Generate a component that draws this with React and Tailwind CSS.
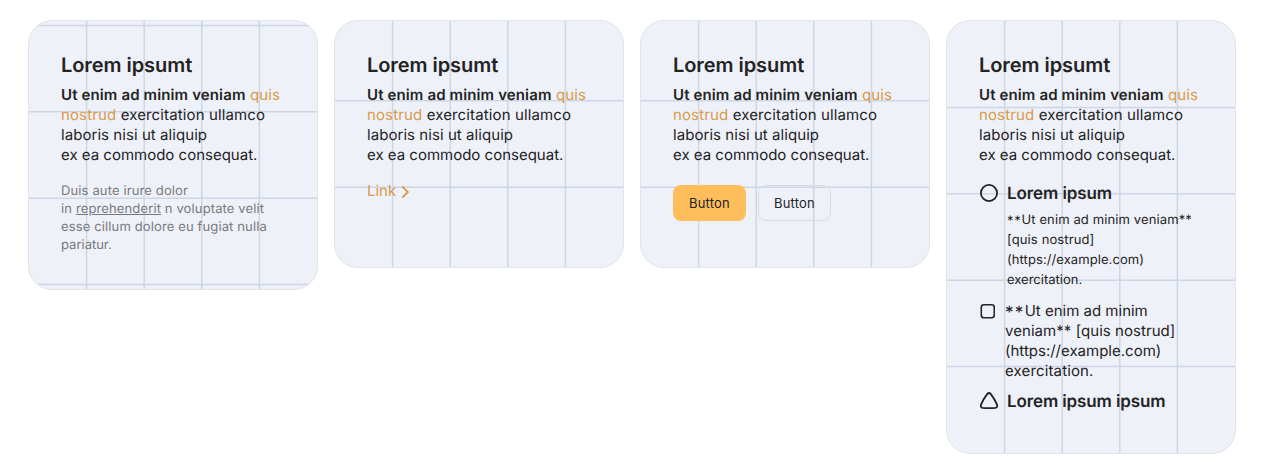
const base =
  'relative overflow-hidden rounded-3xl border border-[#e3e4e5] bg-[#eff1f9] w-[290px] shrink-0';

function Grid() {
  return (
    <svg
      className="absolute inset-0 size-full"
      viewBox="0 0 288 432"
      preserveAspectRatio="xMidYMid slice"
      fill="none"
      stroke="#cdd6e5"
      strokeWidth="1.5"
      aria-hidden="true"
    >
      {[1, 2, 3, 4].map((n) => (
        <path key={`v${n}`} d={`M${n * 57.6} 0V432`} />
      ))}
      {[1, 2, 3, 4].map((n) => (
        <path key={`h${n}`} d={`M0 ${n * 86.4}H288`} />
      ))}
    </svg>
  );
}

function Card({ height, children }) {
  return (
    <article className={`${base} ${height}`}>
      <Grid />
      <div className="relative px-8 pt-8">
        <h2 className="text-[20px] leading-6 font-semibold tracking-[-0.06px]">Lorem ipsumt</h2>
        <p className="mt-2 text-[15px] leading-5">
          <span className="tracking-[0.13px]">
            <b className="font-semibold">Ut enim ad minim veniam</b>{' '}
            <a className="text-[#d89b48]">
              quis
              <br />
              nostrud
            </a>{' '}
            exercitation ullamco
          </span>
          <br />
          <span className="tracking-[0.06px]">laboris nisi ut aliquip</span>
          <br />
          ex ea commodo consequat.
        </p>
        {children}
      </div>
    </article>
  );
}

function Circle() {
  return (
    <svg className="size-5 shrink-0" viewBox="0 0 20 20" fill="none" stroke="currentColor" strokeWidth="1.8">
      <circle cx="10" cy="10" r="8.1" />
    </svg>
  );
}

function Square() {
  return (
    <svg className="mt-0.5 size-4 shrink-0" viewBox="0 0 16 16" fill="none" stroke="currentColor" strokeWidth="1.6">
      <rect x="2.3" y="1.8" width="13" height="13" rx="2.6" />
    </svg>
  );
}

function Triangle() {
  return (
    <svg className="size-5 shrink-0" viewBox="0 0 20 20" fill="none" stroke="currentColor" strokeWidth="1.8" strokeLinejoin="round">
      <path d="M8.15 3.1Q10 .9 11.85 3.1C14.5 6.6 16.7 10.3 18 13.6Q18.9 16.4 16.4 16.9Q10 17.5 3.6 16.9Q1.1 16.4 2 13.6C3.3 10.3 5.5 6.6 8.15 3.1Z" />
    </svg>
  );
}

export default function App() {
  return (
    <main className="flex h-[474px] items-start gap-4 bg-white px-7 pt-5 font-['Inter',sans-serif] text-[#232324] [text-rendering:geometricPrecision]">
      <Card height="h-[270px]">
        <p className="mt-[17px] text-[13px] leading-[18px] tracking-[0.13px] text-[#78797c]">
          Duis aute irure dolor
          <br />
          in <a className="underline">reprehenderit</a> n voluptate velit
          <br />
          esse cillum dolore eu fugiat nulla
          <br />
          <span className="tracking-normal">pariatur.</span>
        </p>
      </Card>

      <Card height="h-[248px]">
        <a className="mt-4 flex items-center gap-[5px] text-[15px] leading-5 text-[#d89b48]">
          Link
          <svg className="h-[13px] w-2" viewBox="0 0 8 13" fill="none" stroke="currentColor" strokeWidth="1.8">
            <path d="M1.2 1.4L6.8 7.1L1.2 12.6" />
          </svg>
        </a>
      </Card>

      <Card height="h-[248px]">
        <div className="mt-5 flex gap-3 text-[13px] leading-[18px] tracking-[0.2px]">
          <button className="h-9 w-[73px] rounded-lg bg-[#ffbe5c]">Button</button>
          <button className="h-9 w-[73px] rounded-lg border border-[#d9dbde]">Button</button>
        </div>
      </Card>

      <Card height="h-[434px]">
        <div className="mt-4 flex gap-2">
          <div className="pt-0.5">
            <Circle />
          </div>
          <div>
            <h3 className="pt-px text-[17px] leading-6 font-semibold tracking-[-0.1px]">Lorem ipsum</h3>
            <p className="mt-1 text-[13px] leading-5 tracking-[0.12px]">
              <span className="relative top-px tracking-[0.7px]">**</span>Ut enim ad minim veniam**
              <br />
              [quis nostrud]
              <br />
              <span className="tracking-[0.08px]">(https://example.com)</span>
              <br />
              <span className="tracking-normal">exercitation.</span>
            </p>
          </div>
        </div>
        <div className="mt-[11px] flex gap-2.5">
          <Square />
          <p className="text-[15px] leading-5">
            <span className="relative top-0.5 text-[17px] leading-none tracking-[1.3px]">**</span>Ut enim ad minim
            <br />
            <span className="tracking-[0.05px]">veniam** [quis nostrud]</span>
            <br />
            (https://example.com)
            <br />
            <span className="tracking-[0.14px]">exercitation.</span>
          </p>
        </div>
        <div className="mt-2 flex items-center gap-2">
          <Triangle />
          <h3 className="relative top-px text-[17px] leading-6 font-semibold tracking-[-0.12px]">Lorem ipsum ipsum</h3>
        </div>
      </Card>
    </main>
  );
}
